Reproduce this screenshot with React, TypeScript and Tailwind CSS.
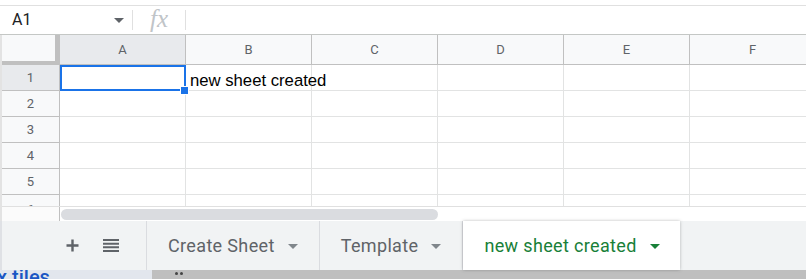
import React from 'react';

const COLS = ['A', 'B', 'C', 'D', 'E', 'F'];
const ROWS = [1, 2, 3, 4, 5];

const Caret = ({ color, className }: { color: string; className?: string }) => (
  <svg width="10" height="5" viewBox="0 0 10 5" className={className}>
    <path d="M0 0 L10 0 L5 5 Z" fill={color} />
  </svg>
);

const Tab = ({ label, active }: { label: string; active?: boolean }) => (
  <div
    className={
      active
        ? 'flex items-center gap-[13px] pl-[21px] pr-[20px] bg-white shadow-[0_0_3px_rgba(60,64,67,0.35)] z-10'
        : 'flex items-center gap-[13px] px-[21px] border-r border-[#dadce0]'
    }
  >
    <span
      className={
        active
          ? 'text-[18px] tracking-[0.35px] text-[#188038]'
          : 'text-[18px] tracking-[0.35px] text-[#5f6368]'
      }
    >
      {label}
    </span>
    <Caret color={active ? '#188038' : '#80868b'} className="mt-[1px]" />
  </div>
);

const App = () => {
  return (
    <div className="w-[806px] h-[279px] overflow-hidden bg-white flex flex-col font-['Roboto',sans-serif]">
      {/* top strip */}
      <div className="h-[6px] shrink-0 border-b border-[#e0e0e0]" />

      {/* Formula bar */}
      <div className="h-[29px] shrink-0 flex items-center border-b border-[#c4c7c5]">
        <div className="w-[132px] flex items-center justify-between pl-[12px] pr-[8px]">
          <span className="text-[16px] text-[#202124]">A1</span>
          <Caret color="#5f6368" />
        </div>
        <div className="w-px h-[20px] bg-[#e0e0e0]" />
        <div className="w-[52px] flex justify-center">
          <span className="font-['Liberation_Serif',serif] italic text-[25px] leading-none text-[#c0c4c8] -mt-[3px]">fx</span>
        </div>
        <div className="w-px h-[20px] bg-[#e0e0e0]" />
      </div>

      {/* Grid */}
      <div className="flex flex-col border-l-2 border-[#e3e3e3] shrink-0">
        {/* column header */}
        <div className="flex h-[30px]">
          <div className="w-[58px] shrink-0 bg-[#f8f9fa] border-r-[5px] border-b-[4px] border-[#c0c0c0]" />
          {COLS.map((c, i) => (
            <div
              key={c}
              className={`w-[126px] shrink-0 flex items-center justify-center text-[13px] text-[#5f6368] border-b border-r border-[#c0c0c0] ${
                i === 0 ? 'bg-[#e8eaed]' : 'bg-[#f8f9fa]'
              }`}
            >
              {c}
            </div>
          ))}
        </div>

        {ROWS.map(r => (
          <div key={r} className="flex h-[26px]">
            <div
              className={`w-[58px] shrink-0 flex items-center justify-center text-[13px] text-[#5f6368] border-b border-r border-[#c0c0c0] ${
                r === 1 ? 'bg-[#e8eaed]' : 'bg-[#f8f9fa]'
              }`}
            >
              {r}
            </div>
            {COLS.map((c, i) => (
              <div key={c} className="w-[126px] shrink-0 relative border-b border-r border-[#e2e3e3]">
                {r === 1 && i === 0 && (
                  <div className="absolute left-0 top-0 -right-px -bottom-px border-2 border-[#1a73e8] z-10">
                    <div className="absolute -right-[5px] -bottom-[6px] w-[9px] h-[9px] bg-[#1a73e8] border border-white" />
                  </div>
                )}
                {r === 1 && i === 1 && (
                  <span className="absolute left-[4px] top-[3px] whitespace-nowrap font-['Liberation_Sans',Arial,sans-serif] text-[16.7px] text-black">
                    new sheet created
                  </span>
                )}
              </div>
            ))}
          </div>
        ))}

        {/* partial row 6 */}
        <div className="flex h-[11px] overflow-hidden">
          <div className="w-[58px] shrink-0 flex justify-center text-[13px] leading-[26px] text-[#5f6368] bg-[#f8f9fa] border-r border-[#c0c0c0] pt-[2px]">
            6
          </div>
          {COLS.map(c => (
            <div key={c} className="w-[126px] shrink-0 border-r border-[#e2e3e3]" />
          ))}
        </div>

        {/* horizontal scrollbar */}
        <div className="flex h-[15px] border-t border-[#e0e0e0]">
          <div className="w-[58px] shrink-0 bg-[#fbfbfb] border-r border-[#c0c0c0]" />
          <div className="flex-1 flex items-center pl-[1px]">
            <div className="w-[377px] h-[11px] rounded-full bg-[#dadce0]" />
          </div>
        </div>
      </div>

      {/* Sheet tabs */}
      <div className="h-[49px] shrink-0 flex bg-[#f1f3f4] border-l-2 border-[#dfe1e5]">
        <div className="w-[145px] shrink-0 flex items-center border-r border-[#dadce0]">
          <svg width="13" height="13" viewBox="0 0 13 13" className="ml-[64px]">
            <path d="M6.5 0.5 V12.5 M0.5 6.5 H12.5" stroke="#5f6368" strokeWidth="2.4" />
          </svg>
          <svg width="16" height="13" viewBox="0 0 16 13" className="ml-[24px]">
            <path d="M0 1 H16 M0 4.7 H16 M0 8.3 H16 M0 12 H16" stroke="#5f6368" strokeWidth="2" />
          </svg>
        </div>
        <Tab label="Create Sheet" />
        <Tab label="Template" />
        <Tab label="new sheet created" active />
      </div>

      {/* page behind */}
      <div className="h-[9px] shrink-0 flex overflow-hidden">
        <div className="w-[152px] shrink-0 bg-[#e2e6ed] overflow-hidden">
          <span className="block -mt-[3px] -ml-[3px] font-['Roboto',sans-serif] font-medium text-[20px] leading-[20px] text-[#1a56c4]">
            x tiles
          </span>
        </div>
        <div className="flex-1 bg-[#bfbfbf] flex gap-[2px] pl-[23px] pt-[2px]">
          <span className="w-[3px] h-[3px] rounded-full bg-[#444]" />
          <span className="w-[3px] h-[3px] rounded-full bg-[#444]" />
        </div>
      </div>
    </div>
  );
};

export default App;
